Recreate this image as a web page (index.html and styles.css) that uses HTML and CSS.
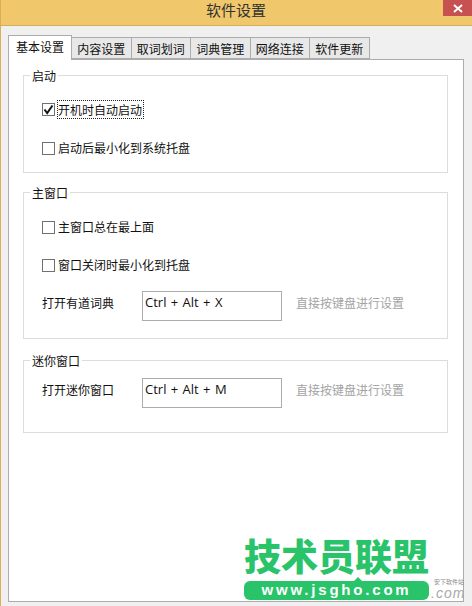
FILE: index.html
```html
<!DOCTYPE html>
<html lang="zh-CN">
	<head>
		<meta charset="utf-8">
		<title>软件设置</title>
		<link rel="stylesheet" href="styles.css">
	</head>
	<body>
		<div class="window">
			<div class="titlebar">
				<span class="title">软件设置</span>
				<button class="close" title="关闭">
					<svg width="10" height="9" viewBox="0 0 10 9"><path d="M1 1L9 8M9 1L1 8" stroke="#fff" stroke-width="2" fill="none"/></svg>
				</button>
			</div>
			<div class="content">
				<div class="tabs">
					<div class="tab active">基本设置</div>
					<div class="tab">内容设置</div>
					<div class="tab">取词划词</div>
					<div class="tab">词典管理</div>
					<div class="tab">网络连接</div>
					<div class="tab">软件更新</div>
				</div>
				<div class="panel">
					<fieldset class="group group-start">
						<legend>启动</legend>
						<label class="check">
							<span class="box">
								<svg width="11" height="11" viewBox="0 0 11 11"><path d="M1.5 5.5L4.2 9L9.5 1.5" stroke="#111" stroke-width="2" fill="none"/></svg>
							</span>
							<span class="focused">开机时自动启动</span>
						</label>
						<label class="check">
							<span class="box"></span>
							<span class="check-text">启动后最小化到系统托盘</span>
						</label>
					</fieldset>
					<fieldset class="group group-main">
						<legend>主窗口</legend>
						<label class="check">
							<span class="box"></span>
							<span class="check-text">主窗口总在最上面</span>
						</label>
						<label class="check">
							<span class="box"></span>
							<span class="check-text">窗口关闭时最小化到托盘</span>
						</label>
						<div class="hotkey">
							<span class="hotkey-label">打开有道词典</span>
							<div class="keys">Ctrl + Alt + X</div>
							<span class="hint">直接按键盘进行设置</span>
						</div>
					</fieldset>
					<fieldset class="group group-mini">
						<legend>迷你窗口</legend>
						<div class="hotkey">
							<span class="hotkey-label">打开迷你窗口</span>
							<div class="keys">Ctrl + Alt + M</div>
							<span class="hint">直接按键盘进行设置</span>
						</div>
					</fieldset>
				</div>
			</div>
			<div class="stamp">
				<div class="stamp-name">技术员联盟</div>
				<div class="stamp-url">www.jsgho.com</div>
			</div>
			<div class="mark">
				<div class="mark-name">安下软件站</div>
				<div class="mark-com">.com</div>
			</div>
		</div>
	</body>
</html>
```

FILE: styles.css
```css
html, body
{
	margin: 0;
	padding: 0;
}

body
{
	font-family: "Noto Sans CJK SC", "Liberation Sans", sans-serif;
	font-size: 12px;
	color: #111;
	background: #f0f0f0;
}

.window
{
	position: relative;
	width: 472px;
	height: 606px;
	overflow: hidden;
	box-sizing: border-box;
	border-left: 1px solid #dcae58;
	background: #f0f0f0;
}

.titlebar
{
	position: relative;
	height: 25px;
	margin-left: -1px;
	background: #f0c76a;
	border-bottom: 1px solid #d6ad5c;
	text-align: center;
	font-size: 15px;
	line-height: 20px;
	color: #333;
}

.close
{
	position: absolute;
	top: 0;
	right: 0;
	width: 29px;
	height: 16px;
	padding: 0;
	border: none;
	background: #c75050;
	display: flex;
	align-items: center;
	justify-content: center;
}

.content
{
	padding: 9px 8px 0 7px;
}

.tabs
{
	display: flex;
	align-items: flex-end;
	height: 24px;
	position: relative;
	z-index: 1;
}

.tab
{
	width: 59.5px;
	height: 22px;
	box-sizing: border-box;
	border: 1px solid #acacac;
	border-left-width: 0;
	background: #e8e8e8;
	text-align: center;
	line-height: 21px;
}

.tab.active
{
	width: 64px;
	height: 25px;
	margin-bottom: -1px;
	border-left-width: 1px;
	border-bottom: none;
	background: #fff;
	line-height: 21px;
}

.panel
{
	width: 456px;
	height: 543px;
	box-sizing: border-box;
	border: 1px solid #acacac;
	background: #fff;
	padding: 0 15px 0 14px;
}

.group
{
	box-sizing: border-box;
	margin: 0;
	padding: 0 0 0 18px;
	border: 1px solid #dcdcdc;
	display: flex;
	flex-direction: column;
}

.group legend
{
	padding: 0 2px;
	margin-left: -12px;
	line-height: 17px;
}

.group-start
{
	margin-top: 7px;
	height: 106px;
	padding-top: 16px;
	gap: 20px;
}

.group-main
{
	margin-top: 11px;
	height: 155px;
	padding-top: 17px;
	gap: 19px;
}

.group-main .hotkey
{
	margin-top: -3px;
}

.group-mini
{
	margin-top: 13px;
	height: 81px;
	padding-top: 9px;
}

.check
{
	display: flex;
	align-items: center;
	height: 19px;
	gap: 3px;
}

.check-text
{
	padding-bottom: 2px;
}

.box
{
	width: 13px;
	height: 13px;
	box-sizing: border-box;
	border: 1px solid #707070;
	background: #fff;
	display: flex;
	align-items: center;
	justify-content: center;
}

.focused
{
	outline: 1px dotted #222;
	padding-right: 1px;
	line-height: 17px;
}

.hotkey
{
	display: flex;
	align-items: center;
}

.hotkey-label
{
	width: 100px;
	margin-bottom: 7px;
}

.keys
{
	width: 140px;
	height: 30px;
	box-sizing: border-box;
	border: 1px solid #acacac;
	padding: 0 2px;
	font-family: "Open Sans", "Liberation Sans", sans-serif;
	font-size: 13px;
	line-height: 20px;
	color: #111;
	word-spacing: 1px;
}

.hint
{
	margin-left: 14px;
	margin-bottom: 7px;
	color: #a3a3a3;
}

.stamp
{
	position: absolute;
	left: 243px;
	top: 536px;
	width: 185px;
	text-align: center;
}

.stamp-name
{
	font-size: 37px;
	line-height: 38px;
	margin-bottom: 7px;
	font-weight: 900;
	color: #29c36a;
	white-space: nowrap;
}

.stamp-url
{
	position: relative;
	height: 19px;
	border-radius: 6px;
	background: #29c36a;
	color: #fff;
	font-family: "Liberation Sans", sans-serif;
	font-weight: bold;
	font-size: 15px;
	line-height: 18px;
	letter-spacing: 2.8px;
}

.stamp-url::before
{
	content: "";
	position: absolute;
	left: 110px;
	top: -4px;
	border: 4px solid transparent;
	border-top: none;
	border-bottom: 4px solid #29c36a;
}

.mark
{
	position: absolute;
	left: 433px;
	top: 578px;
	color: #8a8a8a;
}

.mark-name
{
	font-size: 6px;
	line-height: 8px;
	white-space: nowrap;
}

.mark-com
{
	font-family: "Liberation Sans", sans-serif;
	font-style: italic;
	font-size: 14px;
	line-height: 14px;
	letter-spacing: 1px;
	color: #aaa;
	margin-left: -3px;
}
```
